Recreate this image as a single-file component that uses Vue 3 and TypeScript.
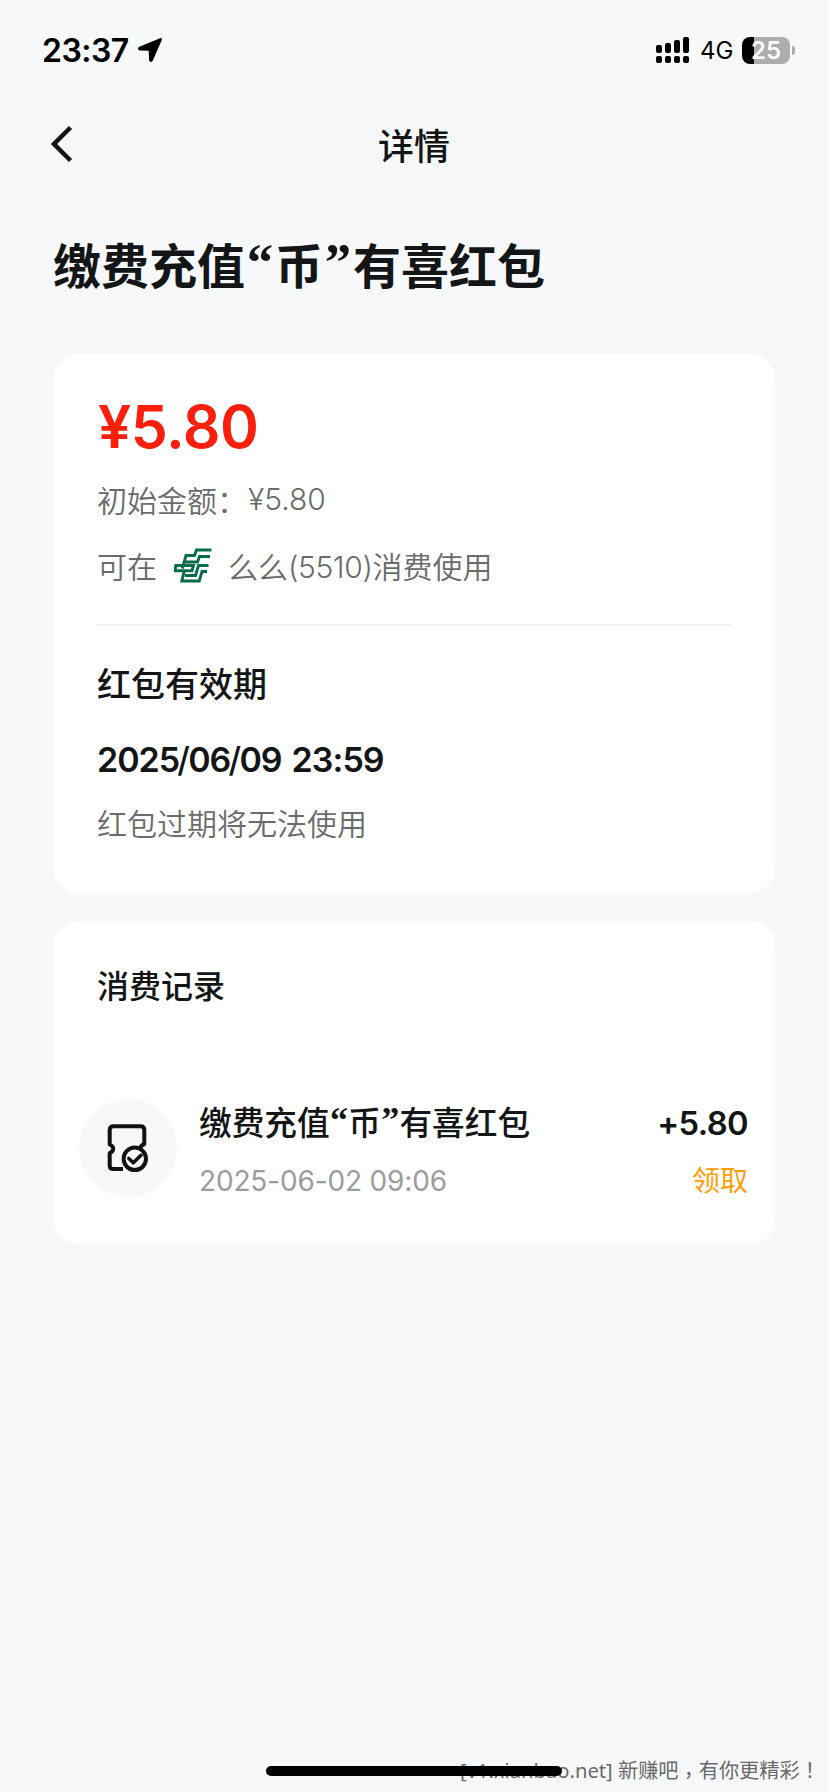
<script setup lang="ts">
interface LedgerEntry {
  title: string
  time: string
  amount: string
  status: string
}

const campaign = '缴费充值“币”有喜红包'
const expiry = '2025/06/09 23:59'
const signalBars = [8, 10, 13, 16]
const entries: LedgerEntry[] = [
  { title: campaign, time: '2025-06-02 09:06', amount: '+5.80', status: '领取' },
]

// Splits text so that quotes and separators can be spaced on their own.
const quoteParts = (text: string): string[] => text.split(/([“”])/)
const dateParts = (text: string): string[] => text.split(/([/: ])/)
const separatorClass = (part: string): string =>
  part === '/' ? 'slash' : part === ' ' ? 'gap' : part === ':' ? 'colon' : 'digits'
</script>

<template>
  <div class="page">
    <header class="status">
      <span class="clock">23:37</span>
      <svg class="location" width="26" height="26" viewBox="0 0 26 26">
        <path d="M23 1.200 2.400 9.800C.4 10.700.6 13.300 2.800 13.400l8.900.4.4 9.300c.2 2.200 2.900 2.400 3.700.5L24.800 3c.5-1.300-.5-2.300-1.800-1.800z" />
      </svg>
      <div class="signal">
        <div v-for="(h, i) in signalBars" :key="i" class="signal-col">
          <i class="signal-bar" :style="{ height: h + 'px' }"></i>
          <i class="signal-dot"></i>
        </div>
      </div>
      <span class="network">4G</span>
      <div class="battery"><span class="battery-text">25</span></div>
      <i class="battery-cap"></i>
    </header>

    <nav class="nav">
      <svg class="back" width="24" height="38" viewBox="0 0 24 38">
        <path d="M20.500 2.500 4 19l16.500 16.500" fill="none" stroke="#141516" stroke-width="4.500" />
      </svg>
      <span class="nav-title">详情</span>
    </nav>

    <h1 class="heading"><span v-for="(part, i) in quoteParts(campaign)" :key="i" :class="{ quote: i % 2 }">{{ part }}</span></h1>

    <section class="card detail">
      <div class="amount">¥5.80</div>
      <div class="line initial"><span>初始金额：</span><span class="initial-num">¥5.80</span></div>
      <div class="line usable">
        <span>可在</span>
        <svg class="bank" width="38" height="35" viewBox="0 0 38 35">
          <g fill="none" stroke="#076c4b" stroke-width="2.900">
            <path d="M37.500 2H22.500l-2 5.500H12L8.300 20.500" />
            <path d="M36 8.500H25.500L23.500 14H11" />
            <path d="M9 17.500H1.800L.9 22.700H18L19.500 17.500H9" />
            <path d="M34.500 17.500H24.500L21.500 27.500H11" />
            <path d="M33 23.500H28L25.300 33H7.800L10.300 23" />
          </g>
        </svg>
        <span>么么<span class="tail-num">(5510)</span>消费使用</span>
      </div>
      <div class="divider"></div>
      <div class="expiry-title">红包有效期</div>
      <div class="expiry-date"><span v-for="(part, i) in dateParts(expiry)" :key="i" :class="separatorClass(part)">{{ part }}</span></div>
      <div class="line expiry-note">红包过期将无法使用</div>
    </section>

    <section class="card records">
      <h2 class="records-title">消费记录</h2>
      <div v-for="entry in entries" :key="entry.time" class="record">
        <div class="record-icon">
          <svg width="44" height="50" viewBox="0 0 44 50">
            <g fill="none" stroke="#111214" stroke-width="4" stroke-linejoin="round">
              <path d="M17 46H7.500C5 46 3.700 44.700 3.700 42.500V30c4.700-2 4.700-6.500 0-8.500V7C3.700 4.500 5 3.300 7.500 3.300h27C37 3.300 38.300 4.500 38.300 7v14c-2.300.8-3.500 2.200-3.800 4" />
              <circle cx="28.800" cy="35.800" r="11.200" />
              <path d="m22.800 35.500 4.500 4.300 7.700-7.500" stroke-width="3.600" stroke-linecap="round" />
            </g>
          </svg>
        </div>
        <div class="record-main">
          <div class="record-title"><span v-for="(part, i) in quoteParts(entry.title)" :key="i" :class="{ quote: i % 2 }">{{ part }}</span></div>
          <div class="record-time">{{ entry.time }}</div>
        </div>
        <div class="record-side">
          <div class="record-amount">{{ entry.amount }}</div>
          <div class="record-status">{{ entry.status }}</div>
        </div>
      </div>
    </section>

    <div class="watermark">[v1.xianbao.net] 新赚吧<span class="comma">，</span>有你更精彩<span class="bang">！</span></div>
    <div class="home-bar"></div>
  </div>
</template>

<style>
body {
  background: #f7f8fa;
}
</style>

<style scoped>
.page {
  position: relative;
  box-sizing: border-box;
  width: 828px;
  height: 1792px;
  overflow: hidden;
  background: #f7f8fa;
  color: #141516;
  font-family: Inter, 'Noto Sans CJK SC', sans-serif;
  white-space: nowrap;
}
.status {
  display: flex;
  align-items: center;
  height: 100px;
  box-sizing: border-box;
  padding: 0 33px 0 42px;
  color: #000;
}
.clock {
  width: 95px;
  font-size: 32px;
  font-weight: 600;
  letter-spacing: -0.5px;
}
.location {
  margin-right: auto;
}
.signal {
  display: flex;
  gap: 3px;
  align-items: flex-end;
  height: 26px;
  margin-right: 11px;
}
.signal-col {
  display: flex;
  flex-direction: column;
  gap: 3px;
}
.signal-bar,
.signal-dot {
  display: block;
  width: 6px;
  border-radius: 2px;
  background: #000;
}
.signal-dot {
  height: 7px;
}
.network {
  width: 42px;
  font-size: 24px;
}
.battery {
  width: 48px;
  height: 27px;
  border-radius: 8px;
  background: linear-gradient(90deg, #000 12px, #adadae 12px);
  color: #fff;
  font-size: 24px;
  font-weight: 600;
  line-height: 27px;
  text-align: center;
}
.battery-cap {
  width: 3px;
  height: 9px;
  margin-left: 2px;
  border-radius: 0 4px 4px 0;
  background: #adadae;
}
.nav {
  display: grid;
  grid-template-columns: 100px 1fr 100px;
  align-items: center;
  height: 88px;
}
.back {
  margin-left: 50px;
}
.nav-title {
  font-size: 36px;
  font-weight: 500;
  text-align: center;
}
.heading {
  height: 80px;
  margin: 38px 0 0 53px;
  font-size: 48px;
  font-weight: 600;
  line-height: 81px;
}
.quote {
  display: inline-block;
  width: 30px;
  font-family: 'Liberation Serif', serif;
  font-size: 1.1em;
  font-weight: 700;
  line-height: 1;
  text-align: center;
  vertical-align: 0.080em;
}
.card {
  box-sizing: border-box;
  width: 722px;
  margin-left: 53px;
  border-radius: 26px;
  background: #fff;
}
.detail {
  height: 539px;
  margin-top: 48px;
  padding: 38px 44px 0;
}
.amount {
  height: 70px;
  margin-left: 1px;
  color: #fc1f0c;
  font-size: 59px;
  font-weight: 600;
  line-height: 70px;
  letter-spacing: -0.5px;
}
.line {
  display: flex;
  align-items: center;
  height: 40px;
  color: #6a6b6c;
  font-size: 30px;
  font-weight: 350;
}
.initial {
  margin-top: 17px;
}
.initial-num {
  margin-left: 1px;
}
.usable {
  margin-top: 26px;
}
.bank {
  margin: 0 16px 0 17px;
}
.tail-num {
  letter-spacing: -0.400px;
}
.divider {
  height: 2px;
  margin-top: 39px;
  background: #f1f2f3;
}
.expiry-title {
  height: 48px;
  margin-top: 35px;
  font-size: 34px;
  font-weight: 500;
  line-height: 48px;
}
.expiry-date {
  display: flex;
  height: 48px;
  margin-top: 27px;
  font-size: 34px;
  font-weight: 600;
  line-height: 48px;
}
.digits {
  letter-spacing: -1px;
}
.slash {
  width: 10px;
  margin-left: -1px;
  font-weight: 500;
  text-indent: -1px;
}
.gap {
  width: 10px;
}
.colon {
  width: 10px;
}
.expiry-note {
  margin-top: 18px;
}
.records {
  height: 323px;
  margin-top: 28px;
  padding: 42px 27px 0 26px;
}
.records-title {
  height: 48px;
  margin: 0 0 0 18px;
  font-size: 32px;
  font-weight: 500;
  line-height: 48px;
}
.record {
  display: flex;
  margin-top: 88px;
}
.record-icon {
  display: flex;
  align-items: center;
  justify-content: center;
  width: 98px;
  height: 98px;
  border-radius: 50%;
  background: #f7f8fa;
}
.record-main {
  flex: 1;
  margin-left: 22px;
}
.record-title,
.record-amount {
  height: 48px;
  font-size: 32.700px;
  font-weight: 500;
  line-height: 48px;
}
.record-amount {
  font-weight: 600;
  letter-spacing: -0.600px;
}
.record-title .quote {
  width: 18.500px;
}
.record-side {
  text-align: right;
}
.record-time,
.record-status {
  height: 40px;
  margin-top: 14px;
  font-size: 28px;
  line-height: 40px;
}
.record-time {
  color: #9b9c9d;
  letter-spacing: -0.150px;
}
.record-status {
  color: #ff9d0a;
}
.watermark {
  position: absolute;
  left: 460px;
  bottom: 7px;
  height: 30px;
  color: #68696a;
  font-family: 'Noto Sans', 'Noto Sans CJK SC', sans-serif;
  font-size: 20.200px;
  line-height: 30px;
}
.comma,
.bang {
  font-family: 'Noto Sans CJK TC', sans-serif;
}
.comma {
  line-height: 1;
  vertical-align: -5px;
}
.home-bar {
  position: absolute;
  bottom: 16px;
  left: 266px;
  width: 296px;
  height: 10px;
  border-radius: 5px;
  background: #000;
}
</style>
